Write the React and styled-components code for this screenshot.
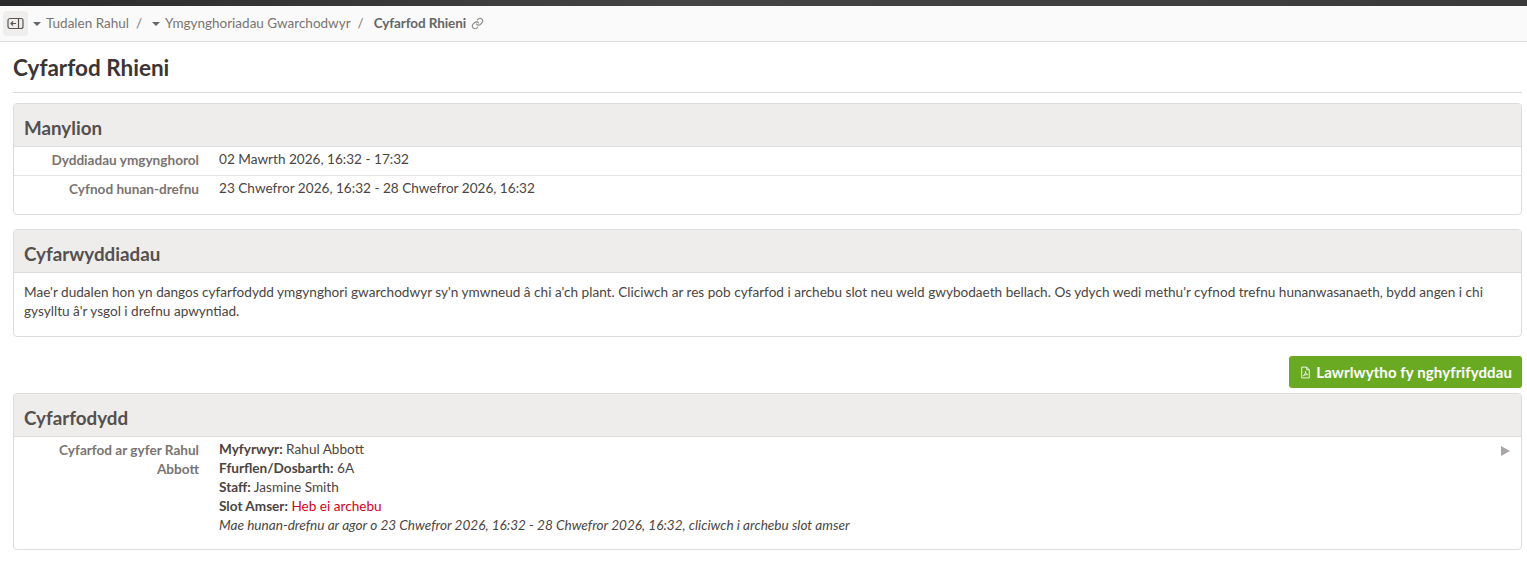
import React from "react";
import styled, { createGlobalStyle } from "styled-components";

const Global = createGlobalStyle`
  html, body { margin: 0; padding: 0; background: #fff; }
  body { font-family: "Lato", "Liberation Sans", sans-serif; font-size: 13.6px; line-height: 19px; color: #4a4543; }
`;

const TopStrip = styled.div`
  height: 6px;
  background: linear-gradient(90deg, #2b2b2b, #444 45%, #3a3a3a);
`;

const Crumbs = styled.nav`
  height: 35px;
  display: flex;
  align-items: center;
  padding-left: 3px;
  background: #fafafa;
  border-bottom: 1px solid #dedcdb;
  color: #7a7472;
  font-size: 13.5px;
`;

const SideToggle = styled.button`
  width: 25px;
  height: 25px;
  margin-right: 5px;
  padding: 0;
  border: 0;
  border-radius: 4px;
  background: #efeeed;
  color: #5a5553;
  display: flex;
  align-items: center;
  justify-content: center;
`;

const Caret = styled.span`
  width: 0;
  height: 0;
  margin-right: 5px;
  border-left: 4px solid transparent;
  border-right: 4px solid transparent;
  border-top: 4px solid #666;
`;

const Sep = styled.span`
  margin: 0 10px 0 7px;
`;

const Current = styled.strong`
  color: #666;
  font-weight: 700;
  letter-spacing: -0.1px;
`;

const LinkMark = styled.span`
  display: flex;
  margin-left: 5px;
  color: #8a8583;
`;

const Main = styled.main`
  padding: 0 5px 0 13px;
`;

const Title = styled.h1`
  margin: 0 0 10px;
  padding: 11px 0 10px;
  border-bottom: 1px solid #dedcdb;
  font-size: 22.5px;
  line-height: 29px;
  font-weight: 700;
  color: #3b3634;
`;

const Card = styled.section`
  border: 1px solid #dedcdb;
  border-radius: 4px;
  margin-bottom: 14px;
  overflow: hidden;
`;

const CardHead = styled.h2`
  margin: 0;
  height: 43px;
  padding: 4px 10px 0;
  display: flex;
  align-items: center;
  box-sizing: border-box;
  background: #eeedec;
  border-bottom: 1px solid #dedcdb;
  font-size: 18.8px;
  font-weight: 700;
  color: #55504e;
`;

const Row = styled.div`
  display: grid;
  grid-template-columns: 185px 1fr;
  column-gap: 20px;
  padding: ${(p) => p.$pad || "3px 0 5px"};
  border-bottom: ${(p) => (p.$last ? "0" : "1px solid #e4e2e1")};
  position: relative;
`;

const Label = styled.div`
  padding: 1px 0 0 12px;
  text-align: right;
  font-weight: 700;
  color: #7a7472;
`;

const Note = styled.p`
  margin: 0;
  padding: 10px 10px 15px;
`;

const Actions = styled.div`
  display: flex;
  justify-content: flex-end;
  margin: 19px 0 5px;
`;

const Download = styled.button`
  height: 32px;
  padding: 0 10px;
  display: flex;
  align-items: center;
  gap: 4px;
  border: 0;
  border-radius: 3px;
  background: #6aaa23;
  color: #fff;
  font: 700 15px "Lato", "Liberation Sans", sans-serif;
  letter-spacing: 0.1px;
`;

const Arrow = styled.span`
  position: absolute;
  right: 11px;
  top: 9px;
  width: 0;
  height: 0;
  border-top: 5px solid transparent;
  border-bottom: 5px solid transparent;
  border-left: 9px solid #aaa5a5;
`;

const Missing = styled.span`
  color: #d0021b;
`;

const Info = styled.div`
  line-height: 19px;
`;

export default function App() {
  return (
    <>
      <Global />
      <TopStrip />
      <Crumbs>
        <SideToggle aria-label="Toggle sidebar">
          <svg width="17" height="13" viewBox="0 0 17 13" fill="none" stroke="currentColor" strokeWidth="1.2">
            <rect x="1" y="1.5" width="15" height="10" rx="2" />
            <path d="M11.5 1.5v10M9 6.5H4M6 4.5l-2 2 2 2" />
          </svg>
        </SideToggle>
        <Caret />
        <span>Tudalen Rahul</span>
        <Sep>/</Sep>
        <Caret />
        <span>Ymgynghoriadau Gwarchodwyr</span>
        <Sep>/</Sep>
        <Current>Cyfarfod Rhieni</Current>
        <LinkMark>
          <svg width="13" height="13" viewBox="0 0 24 24" fill="none" stroke="currentColor" strokeWidth="2" strokeLinecap="round" strokeLinejoin="round">
            <path d="M10 13a5 5 0 0 0 7.5.5l3-3a5 5 0 0 0-7-7l-1.7 1.7" />
            <path d="M14 11a5 5 0 0 0-7.5-.5l-3 3a5 5 0 0 0 7 7l1.7-1.7" />
          </svg>
        </LinkMark>
      </Crumbs>
      <Main>
        <Title>Cyfarfod Rhieni</Title>
        <Card>
          <CardHead>Manylion</CardHead>
          <Row>
            <Label>Dyddiadau ymgynghorol</Label>
            <div>02 Mawrth 2026, 16:32 - 17:32</div>
          </Row>
          <Row $last $pad="3px 0 15px">
            <Label>Cyfnod hunan-drefnu</Label>
            <div>23 Chwefror 2026, 16:32 - 28 Chwefror 2026, 16:32</div>
          </Row>
        </Card>
        <Card>
          <CardHead>Cyfarwyddiadau</CardHead>
          <Note>
            Mae'r dudalen hon yn dangos cyfarfodydd ymgynghori gwarchodwyr sy'n ymwneud â chi a'ch plant. Cliciwch ar res pob cyfarfod i archebu slot neu weld gwybodaeth bellach. Os ydych wedi methu'r cyfnod trefnu hunanwasanaeth, bydd angen i chi gysylltu â'r ysgol i drefnu apwyntiad.
          </Note>
        </Card>
        <Actions>
          <Download>
            <svg width="13" height="13" viewBox="0 0 24 24" fill="none" stroke="currentColor" strokeWidth="1.6" strokeLinejoin="round">
              <path d="M14 2H5v20h14V7z" />
              <path d="M14 2v5h5M8 18c3-2 4-5 4-8 0 3 2 5 4 6-3 0-5 0-8 2z" />
            </svg>
            Lawrlwytho fy nghyfrifyddau
          </Download>
        </Actions>
        <Card>
          <CardHead>Cyfarfodydd</CardHead>
          <Row $last $pad="3px 0 14px">
            <Label>Cyfarfod ar gyfer Rahul Abbott</Label>
            <Info>
              <div><strong>Myfyrwyr:</strong> Rahul Abbott</div>
              <div><strong>Ffurflen/Dosbarth:</strong> 6A</div>
              <div><strong>Staff:</strong> Jasmine Smith</div>
              <div><strong>Slot Amser:</strong> <Missing>Heb ei archebu</Missing></div>
              <div><em>Mae hunan-drefnu ar agor o 23 Chwefror 2026, 16:32 - 28 Chwefror 2026, 16:32, cliciwch i archebu slot amser</em></div>
            </Info>
            <Arrow />
          </Row>
        </Card>
      </Main>
    </>
  );
}
